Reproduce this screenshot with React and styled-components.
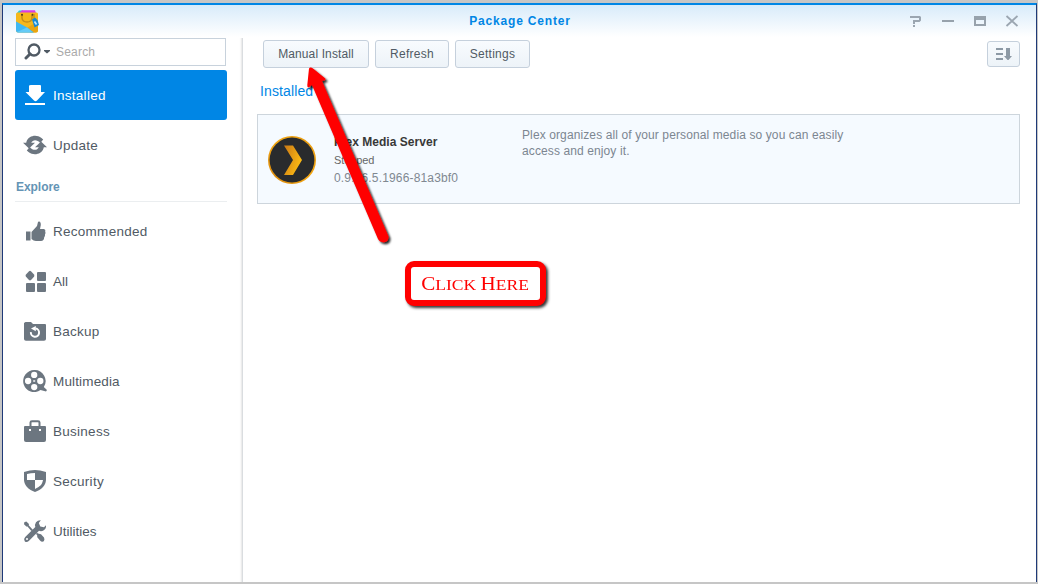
import React from "react";
import styled, { createGlobalStyle } from "styled-components";

const GlobalStyle = createGlobalStyle`
  * { box-sizing: border-box; }
  body {
    margin: 0;
    background: #c6c6c6;
    font-family: "Liberation Sans", Arial, sans-serif;
    overflow: hidden;
  }
`;

const Desktop = styled.div`
  position: relative;
  width: 1038px;
  height: 584px;
  padding: 3px 1px 2px 2px;
`;

const Window = styled.div`
  height: 100%;
  display: flex;
  flex-direction: column;
  background: #fff linear-gradient(#d8ebfa, #fff 32px) no-repeat;
  border: 1px solid #1f3a78;
  border-top: 2px solid #0086e5;
  border-bottom: 0;
`;

const TitleBar = styled.header`
  flex: none;
  height: 33px;
  display: grid;
  grid-template-columns: 1fr auto 1fr;
  align-items: center;
  padding: 0 17px 2px 12px;
`;

const Title = styled.h1`
  margin: 0;
  padding-left: 6px;
  font-size: 12px;
  line-height: 16px;
  letter-spacing: 0.83px;
  color: #0086e5;
`;

const WindowControls = styled.div`
  display: flex;
  justify-content: flex-end;
  gap: 18px;
  svg { display: block; }
`;

const Body = styled.div`
  flex: 1;
  min-height: 0;
  display: flex;
`;

const Sidebar = styled.aside`
  width: 240px;
  padding: 0 15px 0 12px;
  border-right: 1px solid #dadde0;
  box-shadow: inset -3px 0 2px -2px #e6e6e6;
`;

const SearchBox = styled.div`
  display: flex;
  align-items: center;
  width: 211px;
  height: 28px;
  margin-bottom: 4px;
  padding-left: 8px;
  border: 1px solid #c8d2dc;
  background: #fff;
`;

const Placeholder = styled.span`
  margin-left: 5px;
  font-size: 12px;
  line-height: 16px;
  letter-spacing: 0.2px;
  color: #aaa;
`;

const NavItem = styled.div`
  display: flex;
  align-items: center;
  height: 50px;
  padding-left: 7px;
  gap: 5px;
  border-radius: 3px;
  font-size: 13.5px;
  letter-spacing: ${(p) => p.$spacing ?? 0.27}px;
  color: ${(p) => (p.$active ? "#fff" : "#505a64")};
  background: ${(p) => (p.$active ? "#0086e5" : "transparent")};
  svg {
    display: block;
    color: ${(p) => (p.$active ? "#fff" : "#6c7680")};
  }
`;

const SectionLabel = styled.h2`
  height: 32px;
  margin: 0 0 4px;
  padding: 9px 0 0 1px;
  border-bottom: 1px solid #ebeef0;
  font-size: 12px;
  line-height: 16px;
  letter-spacing: -0.05px;
  color: #6494b5;
`;

const Main = styled.main`
  flex: 1;
  padding: 2px 16px 0 14px;
`;

const Toolbar = styled.div`
  display: flex;
  gap: 6px;
  padding-left: 6px;
`;

const Button = styled.button`
  width: ${(p) => p.$width}px;
  height: 28px;
  padding: 0;
  border: 1px solid #c5d0dc;
  border-radius: 3px;
  background: linear-gradient(#f8fbfe, #edf3f8);
  font: 12px/16px "Liberation Sans", Arial, sans-serif;
  letter-spacing: ${(p) => p.$spacing ?? 0.27}px;
  color: #505a64;
`;

const SortButton = styled(Button)`
  display: flex;
  align-items: center;
  justify-content: center;
  height: 26px;
  margin: 1px 0 1px auto;
`;

const Heading = styled.h2`
  margin: 13px 0 0 3px;
  height: 33px;
  font-size: 14px;
  font-weight: 400;
  line-height: 20px;
  letter-spacing: 0.12px;
  color: #0086e5;
`;

const PackageCard = styled.article`
  display: flex;
  height: 90px;
  border: 1px solid #cdd5dc;
  background: #f5faff;
`;

const PackageIcon = styled.div`
  width: 76px;
  padding: 21px 0 0 10px;
  svg { display: block; }
`;

const PackageInfo = styled.div`
  width: 188px;
  padding-top: 19px;
`;

const PackageName = styled.h3`
  margin: 0;
  font-size: 12px;
  line-height: 16px;
  letter-spacing: 0.04px;
  color: #383838;
`;

const PackageStatus = styled.div`
  margin-top: 2px;
  font-size: 11px;
  line-height: 16px;
  letter-spacing: -0.1px;
  color: #666;
`;

const PackageVersion = styled.div`
  margin-top: 2px;
  font-size: 12px;
  line-height: 16px;
  letter-spacing: 0.16px;
  color: #808891;
`;

const Description = styled.p`
  width: 345px;
  margin: 12px 0 0;
  font-size: 12px;
  line-height: 16px;
  letter-spacing: 0.11px;
  color: #7c8691;
`;

const Arrow = styled.svg`
  position: absolute;
  left: 290px;
  top: 55px;
`;

const Callout = styled.div`
  position: absolute;
  left: 405px;
  top: 261px;
  width: 141px;
  height: 45px;
  display: flex;
  align-items: center;
  justify-content: center;
  padding-top: 2px;
  border: 6px solid #f00;
  border-radius: 9px;
  background: #fff;
  box-shadow: 2px 2px 3px #000c;
`;

const CalloutText = styled.span`
  flex: none;
  font: 15px/20px "Liberation Serif", serif;
  color: #f00;
  white-space: nowrap;
  transform: scaleX(1.17);
  b { font-weight: 400; font-size: 18px; }
`;

const Icon = ({ children, size = 26 }) => (
  <svg width={size} height={size} viewBox="0 0 26 26" fill="currentColor">{children}</svg>
);

const BagLogo = () => (
  <svg width="26" height="25" viewBox="0 0 26 25">
    <g transform="translate(0 1)">
      <path d="M2 4 L4 1.5 H8 L7 5 H2Z" fill="#2bc8d8" />
      <path d="M5 3 L7 1.2 H20 L21 4 H5Z" fill="#d93be6" />
      <path d="M1 5 Q1 3.5 2.5 3.5 H21.5 Q23 3.5 23 5 V21.5 Q23 23.5 21 23.5 H3 Q1 23.5 1 21.5Z" fill="#f5b81b" />
      <path d="M23 12 V21.5 Q23 23.5 21 23.5 H15 L12 19Z" fill="#e9a511" />
      <path d="M1 12.5 L13 19 L19 23.5 H3 Q1 23.5 1 21.5Z" fill="#3fb8f2" />
      <path d="M2 23 L12 18.5 L18 23.5 H3Z" fill="#64cbf7" />
      <path d="M7 6 V9 Q7.5 13 12 13 Q16.5 13 17 9 V6" fill="none" stroke="#c58d17" strokeWidth="1.5" />
      <circle cx="7" cy="5.8" r="1" fill="#493c1c" />
      <circle cx="17.5" cy="5.8" r="1" fill="#493c1c" />
      <path d="M19 5 V10" stroke="#a87f20" />
      <path d="M17 10.5 L20 8.5 L22.5 11 L24 16 L19.5 18.5Z" fill="#1689d7" />
      <path d="M19.5 12.5 L21.5 15.5" stroke="#bce9ff" strokeWidth="1.7" />
    </g>
  </svg>
);

const SearchIcon = () => (
  <svg width="27" height="18" viewBox="0 0 27 18">
    <circle cx="10" cy="7" r="5.5" fill="none" stroke="#505a64" strokeWidth="2.3" />
    <path d="M6 11 L2 15" stroke="#505a64" strokeWidth="3" strokeLinecap="round" />
    <path d="M20 7 H26 V8 L23 10.5 L20 8Z" fill="#505a64" />
  </svg>
);

const icons = {
  installed: (
    <><path d="M9 3 H18 Q19 3 19 4 V10 H23 L15 18.5 Q13.5 20 12 18.5 L3.5 10 H7 V4 Q7 3 9 3Z" /><path d="M3 21 H23 V23 H3Z" /></>
  ),
  update: (
    <>
      <path d="M4.6 9.3 C6.5 4 14 1.8 19.5 6 L21.2 7.5 L18.3 11 C15.2 7.3 11 7.2 9.2 10.7 L13 10.8 L7 16.5 L1 10.8 H4.2Z" />
      <path d="M21.4 16.7 C19.5 22 12 24.2 6.5 20 L4.8 18.5 L7.7 15 C10.8 18.7 15 18.8 16.8 15.3 L13 15.2 L19 9.5 L25 15.2 H21.8Z" />
    </>
  ),
  recommended: (
    <>
      <path d="M4 13.5 H8.5 V22.5 H4Z" />
      <path d="M9.5 14 L15 8 L16 4 Q16.5 3 18 3.8 Q19 5 18.8 7 L18 11 H22 Q24 11.5 23.2 13.5 Q24 15 23 16.5 Q23.3 18 22.2 19.2 Q22 23 19 23 H14 Q11.5 22.8 9.5 21Z" />
    </>
  ),
  all: (
    <>
      <path d="M7 3.2 Q8 2.3 9 3.2 L12 6.5 Q12.8 7.7 12 8.8 L9 12 Q8 12.8 7 12 L4 8.8 Q3 7.7 4 6.5Z" />
      <rect x="15" y="4" width="9" height="9" rx="1" />
      <rect x="4" y="15" width="9" height="9" rx="1" /><rect x="15" y="15" width="9" height="9" rx="1" />
    </>
  ),
  backup: (
    <>
      <path d="M2 5 L3.5 4 H9 L11 6 H23 Q24 6 24 7 V21 Q24 22.8 22 22.8 H4 Q2 22.8 2 21Z" />
      <path d="M13.5 10.6 A4.1 4.1 0 1 1 8.9 14.2" fill="none" stroke="#fff" strokeWidth="2" />
      <path d="M13.8 8 V13.2 L9 10.6Z" fill="#fff" />
    </>
  ),
  multimedia: (
    <>
      <path fillRule="evenodd" d="M12.3 2 A11 11 0 1 0 18.5 22 L24 23.5 L25 22 L21.8 19 A11 11 0 0 0 12.3 2Z" />
      {[[12.2, 6.9], [6.1, 13], [18.3, 13], [12.2, 19.1]].map(([x, y]) => <circle key={`${x}-${y}`} cx={x} cy={y} r="3.15" fill="#fff" />)}
      <rect x="11.2" y="12" width="2" height="2" fill="#fff" opacity=".7" />
    </>
  ),
  business: (
    <>
      <path d="M8.5 8 V4.5 Q8.5 3.2 10 3.2 H16 Q17.5 3.2 17.5 4.5 V8" fill="none" stroke="currentColor" strokeWidth="2" />
      <path d="M3 8 H23 Q24 8 24 9 V22 Q24 24 22 24 H4 Q2 24 2 22 V9 Q2 8 3 8Z" />
      <rect x="7" y="11" width="2" height="2" fill="#fff" /><rect x="17" y="11" width="2" height="2" fill="#fff" />
    </>
  ),
  security: (
    <>
      <path d="M2 4 Q8 2 13 2 Q18 2 24 4 V12 C23.5 18 19.5 21.5 13 24 C6.5 21.5 2.5 18 2 12Z" />
      <path d="M5 6 Q9 5 13 5 V12 H21 C20 17 18 18.5 13 21 V12 H5Z" fill="#fff" />
    </>
  ),
  utilities: (
    <>
      <path d="M2.3 4.3 L4.3 3.5 L7 6 L6.7 7.2 L11 12 L9.3 13 L5.5 8.5 L4.3 8.5 L2 6.2Z" />
      <path d="M16 15.5 L19 16.3 L22 19.5 Q23 21.5 21.8 23.3 Q19.8 24.5 18 22.5 L15.3 19.3 L15.1 17 L13.9 15.9 L15 14.8Z" />
      <path d="M18.8 2.2 L16.8 5 L18.3 8.6 L22 9.2 L24 7.2 Q24.4 10.5 21.8 12.2 Q19.5 13.8 17 12.8 L6.8 23 Q4.5 25 2.7 23.2 Q1.2 21 3.2 19 L13.3 9.1 Q12.5 6.5 14 4.2 Q15.8 2 18.8 2.2Z" />
      <circle cx="5" cy="21" r="1" fill="#fff" />
    </>
  ),
};

const explore = [
  ["recommended", "Recommended"],
  ["all", "All", 0],
  ["backup", "Backup"],
  ["multimedia", "Multimedia", 0.15],
  ["business", "Business"],
  ["security", "Security"],
  ["utilities", "Utilities", 0],
];

const PlexLogo = () => (
  <svg width="48" height="48" viewBox="0 0 48 48">
    <defs>
      <linearGradient id="ring" x1="0" y1="1" x2="1" y2="0"><stop stopColor="#d8860c" /><stop offset=".5" stopColor="#f3a712" /><stop offset="1" stopColor="#e79a10" /></linearGradient>
      <linearGradient id="chevron" x1="0" y1="0" x2="1" y2=".5"><stop stopColor="#c97815" /><stop offset="1" stopColor="#fdbb13" /></linearGradient>
    </defs>
    <circle cx="24" cy="24" r="24" fill="url(#ring)" />
    <circle cx="24" cy="24" r="22.4" fill="#292b2d" />
    <path d="M16 9.5 H25 L34 24 L25 39 H16 L25 24Z" fill="url(#chevron)" />
  </svg>
);

export default function App() {
  return (
    <Desktop>
      <GlobalStyle />
      <Window>
        <TitleBar>
          <BagLogo />
          <Title>Package Center</Title>
          <WindowControls>
            <svg width="14" height="12" viewBox="0 0 14 12" fill="#9ba6b1"><path d="M1 1 H11 L12 2 V5.5 L10.5 7 H6 V9 H4 V5 H10 V3 H1Z M4 10 H6 V12 H4Z" /></svg>
            <svg width="14" height="12" viewBox="0 0 14 12" fill="#97a2ac"><path d="M1 5 H13 V7 H1Z" /></svg>
            <svg width="14" height="12" viewBox="0 0 14 12" fill="#97a2ac"><path fillRule="evenodd" d="M1 1 H13 V11 H1Z M3 5 H11 V9 H3Z" /></svg>
            <svg width="14" height="12" viewBox="0 0 14 12" stroke="#9ba6b1" strokeWidth="1.8"><path d="M1.5 1 L12.5 11 M12.5 1 L1.5 11" /></svg>
          </WindowControls>
        </TitleBar>
        <Body>
          <Sidebar>
            <SearchBox><SearchIcon /><Placeholder>Search</Placeholder></SearchBox>
            <NavItem $active><Icon>{icons.installed}</Icon>Installed</NavItem>
            <NavItem><Icon>{icons.update}</Icon>Update</NavItem>
            <SectionLabel>Explore</SectionLabel>
            {explore.map(([id, label, spacing]) => (
              <NavItem key={id} $spacing={spacing}><Icon>{icons[id]}</Icon>{label}</NavItem>
            ))}
          </Sidebar>
          <Main>
            <Toolbar>
              <Button $width={106} $spacing={0.12}>Manual Install</Button>
              <Button $width={74}>Refresh</Button>
              <Button $width={75}>Settings</Button>
              <SortButton $width={33} aria-label="Sort">
                <svg width="17" height="14" viewBox="0 0 17 14" fill="#8c99a5"><path d="M1 1 H8 V3 H1Z M1 6 H8 V8 H1Z M1 11 H8 V13 H1Z M11 1 H15 V9 H17 L13.5 13 H12.5 L9 9 H11Z" /></svg>
              </SortButton>
            </Toolbar>
            <Heading>Installed</Heading>
            <PackageCard>
              <PackageIcon><PlexLogo /></PackageIcon>
              <PackageInfo>
                <PackageName>Plex Media Server</PackageName>
                <PackageStatus>Stopped</PackageStatus>
                <PackageVersion>0.9.16.5.1966-81a3bf0</PackageVersion>
              </PackageInfo>
              <Description>Plex organizes all of your personal media so you can easily access and enjoy it.</Description>
            </PackageCard>
          </Main>
        </Body>
      </Window>
      <Arrow width="120" height="200" viewBox="0 0 120 200">
        <defs><filter id="shadow" x="-20%" y="-20%" width="150%" height="150%"><feDropShadow dx="2" dy="2" stdDeviation="1.3" floodOpacity=".85" /></filter></defs>
        <path d="M20 12.5 Q21.5 12 23 13.5 L35.3 23.5 Q36 25.5 33.5 25.5 L32 26 L98.5 181.5 Q98.5 187 94 187.3 Q90 187.5 88 184 L22 30 L18.5 32.5 Q17 32 17.3 30 L19 13.5Z" fill="#f00" filter="url(#shadow)" />
      </Arrow>
      <Callout><CalloutText><b>C</b>LICK <b>H</b>ERE</CalloutText></Callout>
    </Desktop>
  );
}
